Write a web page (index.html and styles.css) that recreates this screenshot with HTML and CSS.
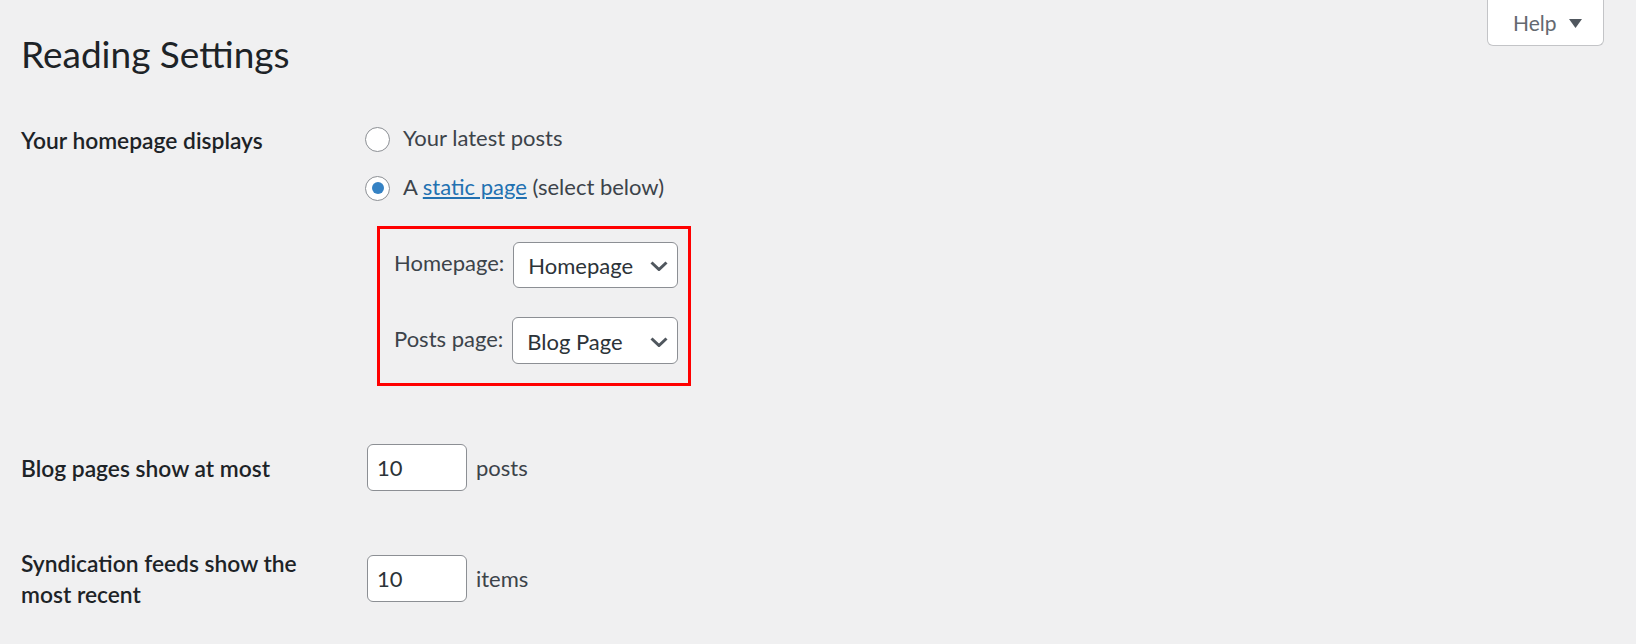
FILE: index.html
```html
<!DOCTYPE html>
<html lang="en">
<head>
    <meta charset="UTF-8">
    <title>Reading Settings</title>
    <link rel="stylesheet" href="styles.css">
</head>
<body>
    <div class="wrap">
        <div class="help-tab">
            <span>Help</span>
            <svg class="help-arrow" width="13" height="9" viewBox="0 0 13 9"><polygon points="0,0 13,0 6.5,9" fill="#50575e"/></svg>
        </div>
        <h1>Reading Settings</h1>

        <div class="form-table">
            <div class="row row-front">
                <div class="th">Your homepage displays</div>
                <div class="td">
                    <label class="radio-line"><span class="radio"></span>Your latest posts</label>
                    <label class="radio-line"><span class="radio checked"></span>A&nbsp;<a href="#">static page</a>&nbsp;(select below)</label>
                    <div class="page-select-box">
                        <div class="select-line">
                            <span class="select-label">Homepage:</span>
                            <div class="select select-home">
                                <span>Homepage</span>
                                <svg width="18" height="10" viewBox="0 0 18 10"><polyline points="1.5,1.5 9,8.5 16.5,1.5" fill="none" stroke="#50575e" stroke-width="3"/></svg>
                            </div>
                        </div>
                        <div class="select-line">
                            <span class="select-label">Posts page:</span>
                            <div class="select select-posts">
                                <span>Blog Page</span>
                                <svg width="18" height="10" viewBox="0 0 18 10"><polyline points="1.5,1.5 9,8.5 16.5,1.5" fill="none" stroke="#50575e" stroke-width="3"/></svg>
                            </div>
                        </div>
                    </div>
                </div>
            </div>

            <div class="row row-blog">
                <div class="th">Blog pages show at most</div>
                <div class="td number-td">
                    <div class="number-field">10</div>
                    <span class="unit">posts</span>
                </div>
            </div>

            <div class="row row-feed">
                <div class="th">Syndication feeds show the most recent</div>
                <div class="td number-td">
                    <div class="number-field">10</div>
                    <span class="unit">items</span>
                </div>
            </div>
        </div>
    </div>
</body>
</html>
```

FILE: styles.css
```css
body {
    margin: 0;
    background: #f0f0f1;
    font-family: Lato, 'Noto Sans', sans-serif;
    color: #3c434a;
}

.wrap {
    padding: 0 32px 0 21px;
}

.help-tab {
    float: right;
    width: 117px;
    height: 46px;
    box-sizing: border-box;
    display: flex;
    align-items: center;
    padding-left: 25px;
    gap: 12px;
    background: #fff;
    border: 1px solid #c3c4c7;
    border-top: none;
    border-radius: 0 0 6px 6px;
    color: #646970;
    font-size: 21px;
}

.help-arrow {
    margin-top: 1px;
}

h1 {
    margin: 0;
    padding-top: 30px;
    font-size: 37px;
    line-height: 48px;
    font-weight: 400;
    color: #1d2327;
}

.row {
    display: grid;
    grid-template-columns: 344px auto;
}

.th {
    width: 290px;
    font-size: 22.8px;
    font-weight: 600;
    line-height: 30.5px;
    color: #1d2327;
}

.row-front {
    margin-top: 45px;
}

.row-front .th {
    padding-top: 2px;
}

.td {
    font-size: 22px;
    line-height: 30px;
}

.radio-line {
    display: flex;
    align-items: center;
    margin-bottom: 19px;
}

.radio {
    width: 25px;
    height: 25px;
    box-sizing: border-box;
    border: 1px solid #8c8f94;
    border-radius: 50%;
    background: #fff;
    margin: 2px 13px 0 0;
    display: flex;
    align-items: center;
    justify-content: center;
}

.radio.checked::after {
    content: "";
    width: 12px;
    height: 12px;
    border-radius: 50%;
    background: #3582c4;
}

.radio-line a {
    color: #2271b1;
}

.page-select-box {
    margin-top: 24px;
    margin-left: 12px;
    width: 314px;
    box-sizing: border-box;
    border: 3px solid #f00;
    padding: 13px 10px 19px 14px;
}

.select-line {
    display: flex;
    align-items: center;
    gap: 9px;
    white-space: nowrap;
}

.select-line + .select-line {
    margin-top: 29px;
}

.select-label {
    margin-top: -4px;
}

.select {
    height: 46px;
    box-sizing: border-box;
    display: flex;
    align-items: center;
    justify-content: space-between;
    padding: 2px 9px 0 14px;
    background: #fff;
    border: 1px solid #8c8f94;
    border-radius: 6px;
    color: #2c3338;
}

.select-home {
    width: 165px;
}

.select-posts {
    width: 166px;
    height: 47px;
}

.row-blog {
    margin-top: 58px;
}

.row-blog .th {
    padding-top: 9px;
}

.row-feed {
    margin-top: 57px;
}

.row-feed .td {
    padding-top: 7px;
}

.number-td {
    display: flex;
    align-items: flex-start;
    gap: 9px;
    padding-left: 2px;
}

.number-field {
    width: 100px;
    height: 47px;
    box-sizing: border-box;
    padding: 0 9px;
    line-height: 45px;
    background: #fff;
    border: 1px solid #8c8f94;
    border-radius: 6px;
    color: #2c3338;
}

.unit {
    line-height: 47px;
}
```
